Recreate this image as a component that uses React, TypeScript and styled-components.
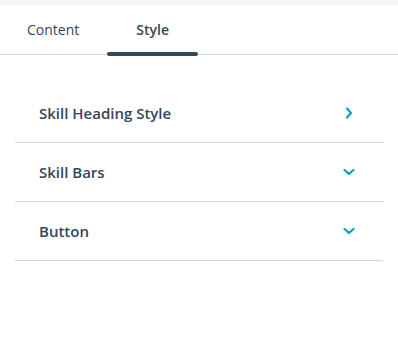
import React, { useState } from 'react';
import styled, { createGlobalStyle } from 'styled-components';

const GlobalStyle = createGlobalStyle`
  html, body {
    margin: 0;
    padding: 0;
    background: #ffffff;
  }
  body {
    font-family: 'Open Sans', 'Liberation Sans', sans-serif;
    color: #33475b;
    -webkit-font-smoothing: antialiased;
  }
`;

const Panel = styled.div`
  width: 398px;
  height: 363px;
  background: #ffffff;
`;

const TopStrip = styled.div`
  height: 5px;
  background: #f5f8fa;
`;

const TabBar = styled.div`
  display: flex;
  height: 49px;
  border-bottom: 1px solid #cbd6e2;
`;

const Tab = styled.button<{ $active?: boolean }>`
  position: relative;
  display: flex;
  align-items: center;
  padding: 0 29px;
  border: 0;
  background: none;
  font-family: inherit;
  font-size: 14px;
  font-weight: ${(p) => (p.$active ? 600 : 400)};
  color: #33475b;
  cursor: pointer;

  &:first-child {
    padding: 0 28px 0 27px;
  }

  &::after {
    content: '';
    display: ${(p) => (p.$active ? 'block' : 'none')};
    position: absolute;
    left: 0;
    right: 0;
    bottom: -2px;
    height: 4px;
    border-radius: 2px;
    background: #33475b;
  }
`;

const Sections = styled.div`
  margin: 0 15px;
  padding-top: 29px;
`;

const SectionRow = styled.div`
  display: flex;
  align-items: center;
  justify-content: space-between;
  height: 58px;
  padding: 0 27px 0 24px;
  border-bottom: 1px solid #cbd6e2;
  cursor: pointer;
`;

const SectionTitle = styled.span`
  font-size: 15px;
  font-weight: 600;
  color: #33475b;
  margin-top: -1px;
`;

const Chevron = styled.svg<{ $open?: boolean }>`
  width: 14px;
  height: 14px;
  color: #00a4bd;
  transform: rotate(${(p) => (p.$open ? '0deg' : '-90deg')});
`;

const ChevronIcon = ({ open }: { open?: boolean }) => (
  <Chevron $open={open} viewBox="0 0 14 14" fill="none">
    <path
      d="M2.5 5 L7 9 L11.5 5"
      stroke="currentColor"
      strokeWidth="2.2"
      strokeLinecap="round"
      strokeLinejoin="round"
    />
  </Chevron>
);

const sections = [
  { key: 'heading', title: 'Skill Heading Style', open: false },
  { key: 'bars', title: 'Skill Bars', open: true },
  { key: 'button', title: 'Button', open: true },
];

export default function App() {
  const [tab, setTab] = useState('style');

  return (
    <Panel>
      <GlobalStyle />
      <TopStrip />
      <TabBar>
        <Tab $active={tab === 'content'} onClick={() => setTab('content')}>
          Content
        </Tab>
        <Tab $active={tab === 'style'} onClick={() => setTab('style')}>
          Style
        </Tab>
      </TabBar>
      <Sections>
        {sections.map((s) => (
          <SectionRow key={s.key}>
            <SectionTitle>{s.title}</SectionTitle>
            <ChevronIcon open={s.open} />
          </SectionRow>
        ))}
      </Sections>
    </Panel>
  );
}
